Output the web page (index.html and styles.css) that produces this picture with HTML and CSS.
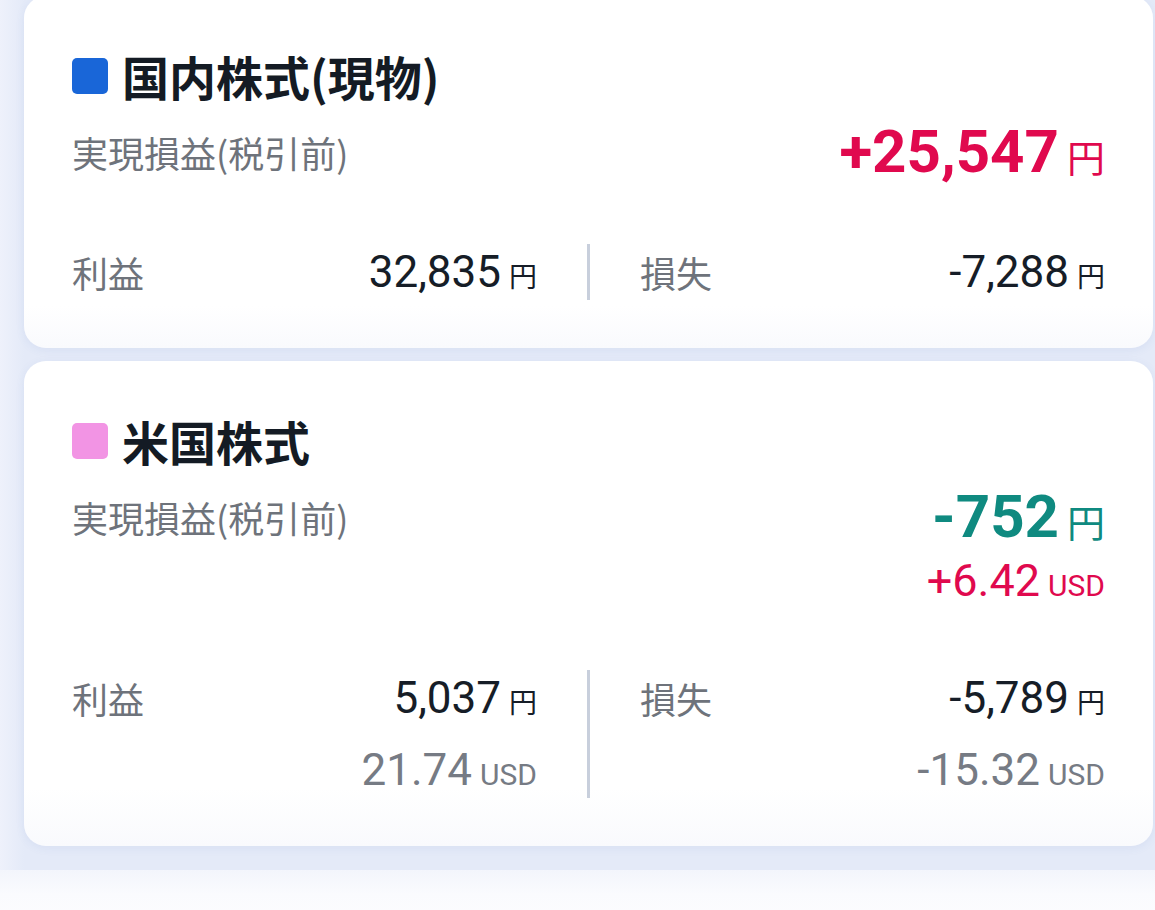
FILE: index.html
```html
<!DOCTYPE html>
<html lang="ja">
<head>
  <meta charset="UTF-8">
  <title>実現損益</title>
  <link rel="stylesheet" href="styles.css">
</head>
<body>
<div class="list">
  <div class="card">
    <h2 class="card-title"><span class="mark mark-jp"></span>国内株式(現物)</h2>
    <div class="summary">
      <div class="summary-label">実現損益(税引前)</div>
      <div class="summary-values">
        <div class="big plus">+25,547<span class="unit-big">円</span></div>
      </div>
    </div>
    <div class="split">
      <div class="half">
        <div class="label">利益</div>
        <div class="vals">
          <div class="val">32,835<span class="unit">円</span></div>
        </div>
      </div>
      <div class="divider"></div>
      <div class="half">
        <div class="label">損失</div>
        <div class="vals">
          <div class="val">-7,288<span class="unit">円</span></div>
        </div>
      </div>
    </div>
  </div>

  <div class="card">
    <h2 class="card-title"><span class="mark mark-us"></span>米国株式</h2>
    <div class="summary">
      <div class="summary-label">実現損益(税引前)</div>
      <div class="summary-values">
        <div class="big minus">-752<span class="unit-big">円</span></div>
        <div class="sub plus">+6.42<span class="unit-usd">USD</span></div>
      </div>
    </div>
    <div class="split">
      <div class="half">
        <div class="label">利益</div>
        <div class="vals">
          <div class="val">5,037<span class="unit">円</span></div>
          <div class="val usd">21.74<span class="unit-usd">USD</span></div>
        </div>
      </div>
      <div class="divider"></div>
      <div class="half">
        <div class="label">損失</div>
        <div class="vals">
          <div class="val">-5,789<span class="unit">円</span></div>
          <div class="val usd">-15.32<span class="unit-usd">USD</span></div>
        </div>
      </div>
    </div>
  </div>
</div>
<div class="next"></div>
</body>
</html>
```

FILE: styles.css
```css
body {
  margin: 0;
  font-family: Roboto, "Noto Sans CJK JP", sans-serif;
  background: linear-gradient(90deg, #eef1fb 0, #e4eaf8 24px, #e4eaf8 100%);
  color: #161d27;
  overflow: hidden;
}
.list {
  margin-top: -4px;
  padding: 0 2px 0 24px;
  display: flex;
  flex-direction: column;
  gap: 13px;
}
.card {
  background: linear-gradient(180deg, #fff 0, #fff 88%, #f9fafd 100%);
  border-radius: 22px;
  padding: 56px 48px 48px 48px;
  box-shadow: 0 2px 10px rgba(70, 100, 180, 0.08);
}
.card-title {
  margin: 0;
  display: flex;
  align-items: center;
  font-family: "Noto Sans CJK JP", sans-serif;
  font-size: 47px;
  font-weight: 700;
  line-height: 48px;
  color: #141b24;
}
.mark {
  width: 36px;
  height: 36px;
  border-radius: 5px;
  margin-right: 14px;
}
.mark-jp { background: #1966d8; }
.mark-us { background: #f294e4; }

.summary {
  margin-top: 16px;
  display: flex;
  justify-content: space-between;
  align-items: flex-start;
}
.summary-label {
  font-family: "Noto Sans CJK JP", sans-serif;
  font-size: 36px;
  line-height: 72px;
  color: #6e737b;
}
.summary-values {
  text-align: right;
}
.big {
  font-size: 60px;
  font-weight: 700;
  line-height: 72px;
}
.unit-big {
  font-family: "Noto Sans CJK JP", sans-serif;
  font-size: 38px;
  font-weight: 400;
  line-height: 1;
  margin-left: 8px;
}
.sub {
  font-size: 45px;
  line-height: 56px;
  margin-bottom: 5px;
}
.plus { color: #e0094e; }
.minus { color: #0f8a80; }

.split {
  margin-top: 56px;
  display: flex;
}
.half {
  flex: 1;
  display: flex;
  justify-content: space-between;
  align-items: flex-start;
}
.divider {
  width: 3px;
  margin: 0 50px;
  background: #c8cfdc;
}
.label {
  font-family: "Noto Sans CJK JP", sans-serif;
  font-size: 36px;
  line-height: 56px;
  color: #6e737b;
}
.vals {
  text-align: right;
}
.val {
  font-size: 44px;
  line-height: 56px;
  color: #161d27;
}
.val.usd {
  margin-top: 16px;
  color: #767b84;
}
.unit {
  font-family: "Noto Sans CJK JP", sans-serif;
  font-size: 28px;
  line-height: 1;
  margin-left: 8px;
}
.unit-usd {
  font-size: 30px;
  line-height: 1;
  margin-left: 8px;
}
.next {
  margin-top: 24px;
  height: 60px;
  background: linear-gradient(180deg, #f3f5fc 0, #fafbfe 40%, #fdfdff 100%);
}
```
